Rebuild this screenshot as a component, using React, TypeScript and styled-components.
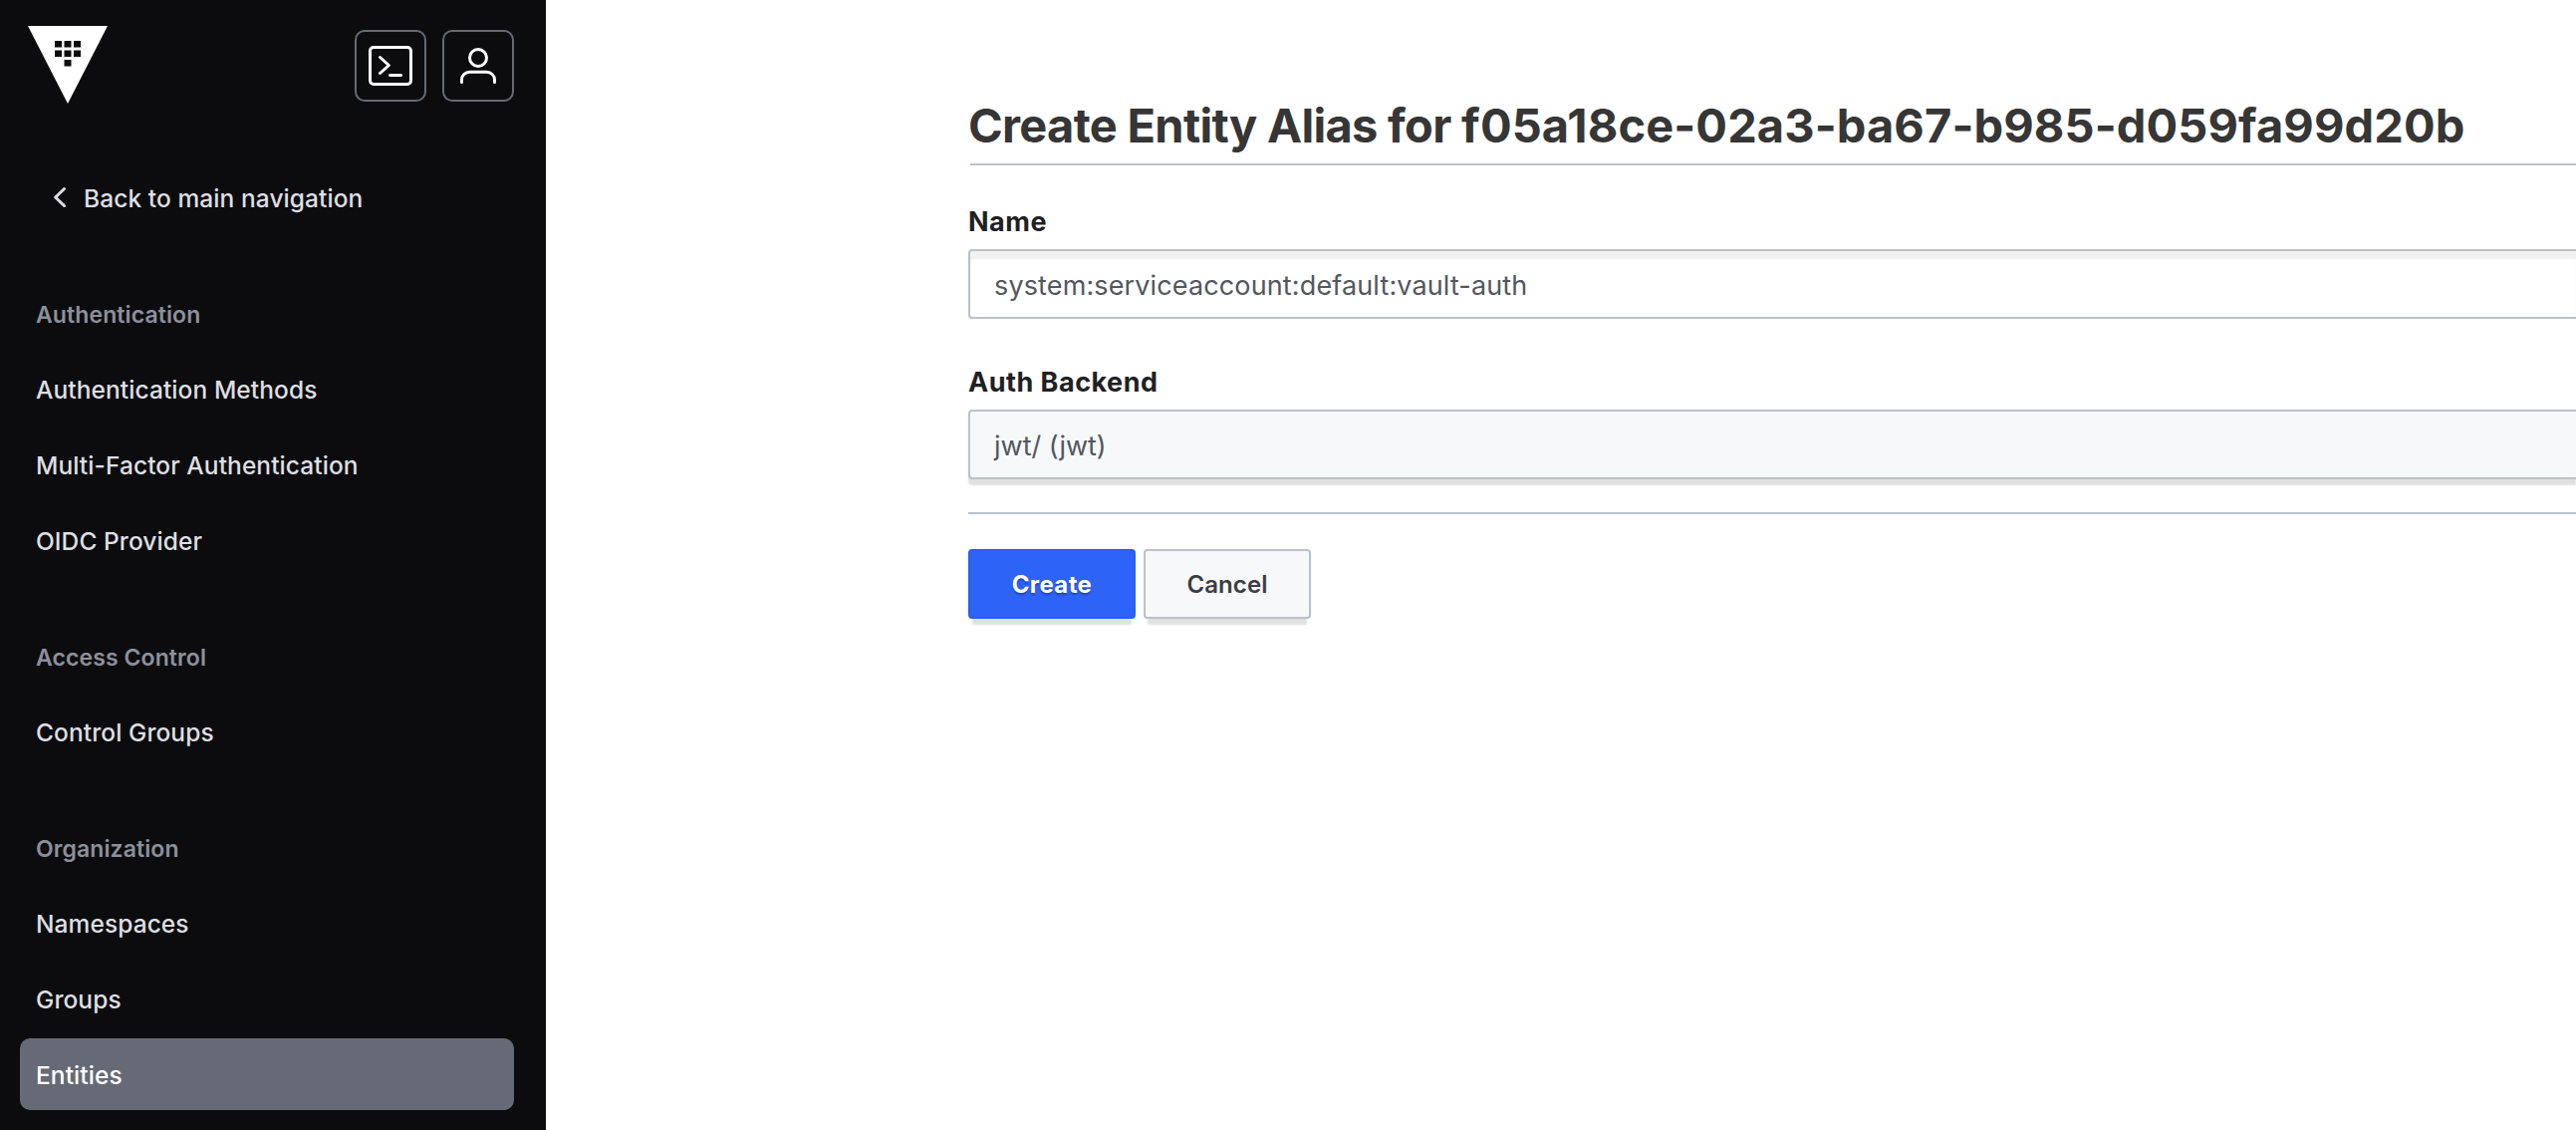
import React from "react";
import styled, { createGlobalStyle } from "styled-components";

const GlobalStyle = createGlobalStyle`
  *, *::before, *::after { box-sizing: border-box; }
  html, body { margin: 0; overflow: hidden; }
  body {
    background: #ffffff;
    font-family: Inter, "Liberation Sans", sans-serif;
  }
`;

const Page = styled.div`
  display: flex;
  width: 100%;
  height: 1134px;
  overflow: hidden;
`;

const Sidebar = styled.aside`
  display: flex;
  flex-direction: column;
  flex: 0 0 548px;
  padding: 26px 32px 20px 20px;
  background: #0c0c0e;
`;

const SidebarHeader = styled.header`
  display: flex;
  align-items: flex-start;
  height: 136px;
  padding-left: 8px;
`;

const HomeLink = styled.a`
  display: flex;
  margin-right: auto;
`;

const HeaderActions = styled.div`
  display: flex;
  gap: 16px;
  padding-top: 4px;
`;

const IconButton = styled.button`
  display: flex;
  align-items: center;
  justify-content: center;
  width: 72px;
  height: 72px;
  padding: 0;
  color: #ffffff;
  background: transparent;
  border: 2px solid #656a76;
  border-radius: 10px;
`;

const Nav = styled.nav`
  display: flex;
  flex-direction: column;
  gap: 44px;
`;

const NavGroup = styled.div`
  display: flex;
  flex-direction: column;
  gap: 4px;
`;

const NavHeading = styled.div`
  height: 72px;
  padding: 4px 16px 0;
  color: #8c909c;
  font-size: 23px;
  font-weight: 600;
  line-height: 68px;
  letter-spacing: 0.1px;
`;

const NavLink = styled.a<{ $active?: boolean }>`
  display: flex;
  height: 72px;
  padding: 2px 16px 0;
  color: ${(p) => (p.$active ? "#ffffff" : "#dedfe3")};
  background: ${(p) => (p.$active ? "#656a76" : "transparent")};
  border-radius: 10px;
  font-size: 24.5px;
  font-weight: 500;
  line-height: 70px;
  letter-spacing: 0.08px;
  white-space: nowrap;
`;

const BackLink = styled(NavLink)`
  padding-left: 32px;
`;

const BackIcon = styled.svg`
  flex: none;
  margin: 22px 16px 0 0;
`;

const Main = styled.main`
  flex: 1;
  min-width: 0;
  padding: 98px 0 0 424px;
`;

const Title = styled.h1`
  margin: 0 0 10px;
  color: #363636;
  font-size: 47px;
  font-weight: 700;
  line-height: 56px;
  letter-spacing: -0.7px;
  white-space: nowrap;
`;

const EntityId = styled.span`
  letter-spacing: 0.1px;
`;

const TitleRule = styled.div`
  height: 2px;
  margin: 0 0 38px 2px;
  background: #bac1cc;
`;

const Field = styled.div`
  display: flex;
  flex-direction: column;
  gap: 9px;

  & + & {
    margin-top: 45px;
  }
`;

const Label = styled.label`
  padding-top: 1px;
  color: #1f2124;
  font-size: 27px;
  font-weight: 700;
  line-height: 36px;
  letter-spacing: 0.5px;
`;

const Control = styled.div`
  height: 70px;
  padding: 3px 24px 0;
  color: #525761;
  border: 2px solid #bac1cc;
  border-right: 0;
  border-radius: 4px 0 0 4px;
  font-size: 27px;
  line-height: 63px;
`;

const TextInput = styled(Control)`
  background: #ffffff;
  box-shadow: inset 0 8px 2px rgba(10, 10, 10, 0.06);
  letter-spacing: 0.13px;
`;

const SelectInput = styled(Control)`
  background: #f7f8fa;
  box-shadow: 0 6px 2px rgba(0, 0, 0, 0.12);
`;

const FormActions = styled.div`
  display: flex;
  gap: 8px;
  margin-top: 33px;
  padding-top: 35px;
  border-top: 2px solid #bac1cc;
`;

const Button = styled.button<{ $primary?: boolean }>`
  width: 168px;
  height: 70px;
  padding: 1px 0 0;
  color: ${(p) => (p.$primary ? "#ffffff" : "#3b3d45")};
  background: ${(p) => (p.$primary ? "#2e63f8" : "#f7f8fa")};
  border: 2px solid ${(p) => (p.$primary ? "#295df0" : "#bac1cc")};
  border-radius: 4px;
  box-shadow: 0 10px 2px -4px rgba(0, 0, 0, 0.12);
  font-family: inherit;
  font-size: 24px;
  font-weight: ${(p) => (p.$primary ? 700 : 600)};
  line-height: 65px;
  letter-spacing: ${(p) => (p.$primary ? "0.4px" : "0.1px")};
  text-shadow: ${(p) => (p.$primary ? "0 2px 2px rgba(0, 0, 0, 0.3)" : "none")};
`;

const LOGO_CELLS = [
  [27, 15],
  [36.5, 15],
  [46, 15],
  [27, 24.5],
  [36.5, 24.5],
  [46, 24.5],
  [36.5, 34],
];

const VaultLogo = () => (
  <svg width="80" height="78" viewBox="0 0 80 78">
    <path d="M0 0H80L40 78Z" fill="#ffffff" />
    {LOGO_CELLS.map(([x, y]) => (
      <rect key={`${x}-${y}`} x={x} y={y} width="7" height="6.5" fill="#0c0c0e" />
    ))}
  </svg>
);

const strokeProps = {
  fill: "none",
  stroke: "currentColor",
  strokeWidth: 1.5,
  strokeLinecap: "round" as const,
  strokeLinejoin: "round" as const,
};

const TerminalIcon = () => (
  <svg width="48" height="48" viewBox="0 0 24 24" {...strokeProps}>
    <rect x="1.75" y="2.75" width="20.5" height="18.5" rx="1.75" />
    <path d="M6.75 7.75L11.2 11.75L6.75 15.75M11.75 16.75H17.25" />
  </svg>
);

const UserIcon = () => (
  <svg width="48" height="48" viewBox="0 0 24 24" {...strokeProps}>
    <circle cx="12" cy="8" r="4.25" />
    <path d="M3.75 20.25V19.1a4 4 0 0 1 4-4h8.5a4 4 0 0 1 4 4v1.15" />
  </svg>
);

const groups = [
  {
    heading: "Authentication",
    links: ["Authentication Methods", "Multi-Factor Authentication", "OIDC Provider"],
  },
  { heading: "Access Control", links: ["Control Groups"] },
  { heading: "Organization", links: ["Namespaces", "Groups", "Entities"] },
];

export default function App() {
  return (
    <Page>
      <GlobalStyle />
      <Sidebar>
        <SidebarHeader>
          <HomeLink>
            <VaultLogo />
          </HomeLink>
          <HeaderActions>
            <IconButton>
              <TerminalIcon />
            </IconButton>
            <IconButton>
              <UserIcon />
            </IconButton>
          </HeaderActions>
        </SidebarHeader>
        <Nav>
          <BackLink>
            <BackIcon width="16" height="24" viewBox="0 0 16 24">
              <path
                d="M12.5 3.5L3.7 12L12.5 20.5"
                fill="none"
                stroke="currentColor"
                strokeWidth="3"
                strokeLinecap="round"
                strokeLinejoin="round"
              />
            </BackIcon>
            Back to main navigation
          </BackLink>
          {groups.map((group) => (
            <NavGroup key={group.heading}>
              <NavHeading>{group.heading}</NavHeading>
              {group.links.map((link) => (
                <NavLink key={link} $active={link === "Entities"}>
                  {link}
                </NavLink>
              ))}
            </NavGroup>
          ))}
        </Nav>
      </Sidebar>
      <Main>
        <Title>
          Create Entity Alias for <EntityId>f05a18ce-02a3-ba67-b985-d059fa99d20b</EntityId>
        </Title>
        <TitleRule />
        <Field>
          <Label>Name</Label>
          <TextInput>system:serviceaccount:default:vault-auth</TextInput>
        </Field>
        <Field>
          <Label>Auth Backend</Label>
          <SelectInput>jwt/ (jwt)</SelectInput>
        </Field>
        <FormActions>
          <Button $primary>Create</Button>
          <Button>Cancel</Button>
        </FormActions>
      </Main>
    </Page>
  );
}
